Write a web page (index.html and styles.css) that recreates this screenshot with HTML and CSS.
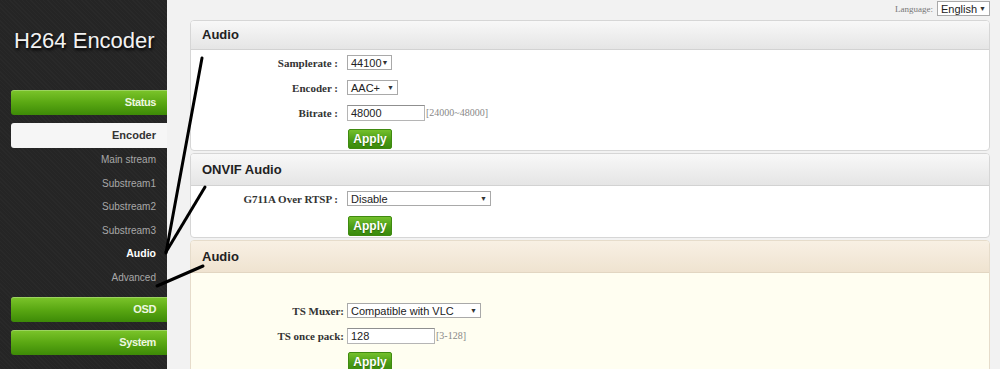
FILE: index.html
```html
<!DOCTYPE html>
<html lang="en">
<head>
    <meta charset="UTF-8">
    <title>H264 Encoder - Audio</title>
    <link rel="stylesheet" href="styles.css">
</head>
<body>
<div class="sidebar">
    <h1 class="logo">H264 Encoder</h1>
    <div class="menu-btn">Status</div>
    <div class="menu-open">Encoder</div>
    <ul class="submenu">
        <li>Main stream</li>
        <li>Substream1</li>
        <li>Substream2</li>
        <li>Substream3</li>
        <li class="active">Audio</li>
        <li>Advanced</li>
    </ul>
    <div class="menu-btn">OSD</div>
    <div class="menu-btn">System</div>
</div>

<div class="main">
    <div class="topbar">
        <span class="lang-label">Language:</span>
        <div class="field lang-select"><span>English</span><span class="arrow">▼</span></div>
    </div>

    <div class="panel">
        <div class="panel-head">Audio</div>
        <div class="panel-body">
            <div class="row">
                <label>Samplerate :</label>
                <div class="field w45"><span>44100</span><span class="arrow">▼</span></div>
            </div>
            <div class="row">
                <label>Encoder :</label>
                <div class="field w51"><span>AAC+</span><span class="arrow">▼</span></div>
            </div>
            <div class="row">
                <label>Bitrate :</label>
                <div class="field input w78">48000</div>
                <span class="hint">[24000~48000]</span>
            </div>
            <div class="btn-row"><button class="apply">Apply</button></div>
        </div>
    </div>

    <div class="panel">
        <div class="panel-head tall">ONVIF Audio</div>
        <div class="panel-body">
            <div class="row">
                <label>G711A Over RTSP :</label>
                <div class="field w144"><span>Disable</span><span class="arrow">▼</span></div>
            </div>
            <div class="btn-row wide"><button class="apply">Apply</button></div>
        </div>
    </div>

    <div class="panel warm">
        <div class="panel-head tall">Audio</div>
        <div class="panel-body spaced">
            <div class="row tight">
                <label>TS Muxer:</label>
                <div class="field w134"><span>Compatible with VLC</span><span class="arrow">▼</span></div>
            </div>
            <div class="row tight">
                <label>TS once pack:</label>
                <div class="field input w88">128</div>
                <span class="hint">[3-128]</span>
            </div>
            <div class="btn-row"><button class="apply">Apply</button></div>
        </div>
    </div>
</div>

<!-- hand drawn marks over the screenshot -->
<svg class="marks" width="1000" height="369" viewBox="0 0 1000 369">
    <path d="M202 58 L166 253" />
    <path d="M205 187 L166 252" />
    <path d="M203 266 L157 286" />
</svg>
</body>
</html>
```

FILE: styles.css
```css
body {
    margin: 0;
    padding: 0;
    display: flex;
    height: 369px;
    overflow: hidden;
    background-color: #f2f2f2;
    font-family: "Liberation Sans", Arial, sans-serif;
    position: relative;
}

.sidebar {
    width: 167px;
    flex-shrink: 0;
    background-color: #252525;
    background-image: repeating-linear-gradient(45deg, rgba(255,255,255,0.02) 0 1px, transparent 1px 3px);
}

.logo {
    margin: 28px 0 36px 14px;
    font-size: 22px;
    line-height: 26px;
    font-weight: normal;
    color: #f2f2f2;
    text-shadow: 1px 2px 3px #000;
}

.menu-btn {
    margin: 0 0 8px 11px;
    height: 25px;
    line-height: 25px;
    padding-right: 11px;
    text-align: right;
    font-size: 11px;
    font-weight: bold;
    letter-spacing: -0.4px;
    color: #eef7e0;
    border-radius: 3px 0 0 3px;
    background: linear-gradient(to bottom, #7cc52b 0%, #5aa813 50%, #3d8a07 100%);
    box-shadow: inset 0 1px 0 rgba(255,255,255,0.25);
}

.menu-open {
    margin: 0 0 0 11px;
    height: 25px;
    line-height: 25px;
    padding-right: 11px;
    text-align: right;
    font-size: 11px;
    font-weight: bold;
    color: #333;
    background-color: #f6f6f6;
    border-radius: 3px 0 0 3px;
}

.submenu {
    list-style: none;
    margin: 0 0 8px 0;
    padding: 0 11px 0 0;
}

.submenu li {
    height: 23.5px;
    line-height: 23.5px;
    text-align: right;
    font-size: 10px;
    color: #a8a8a8;
}

.submenu li.active {
    color: #fff;
    font-weight: bold;
    font-size: 10.5px;
}

.main {
    flex: 1;
    padding: 0 10px 0 23px;
}

.topbar {
    height: 20px;
    display: flex;
    justify-content: flex-end;
    align-items: flex-start;
    gap: 4px;
    padding-top: 1px;
    box-sizing: border-box;
}

.lang-label {
    font-family: "Liberation Serif", "Times New Roman", serif;
    font-size: 9px;
    color: #777;
    margin-top: 3px;
}

.lang-select {
    width: 53px;
    height: 15px;
    font-size: 12px;
}

.panel {
    background-color: #fff;
    border: 1px solid #d6d6d6;
    border-radius: 4px;
    margin-bottom: 2px;
    overflow: hidden;
}

.panel-head {
    height: 28px;
    line-height: 28px;
    padding-left: 11px;
    font-size: 13px;
    font-weight: bold;
    color: #222;
    background: linear-gradient(to bottom, #f8f8f8, #e5e5e5);
    border-bottom: 1px solid #d2d2d2;
}

.panel-head.tall {
    height: 31px;
    line-height: 31px;
}

.warm {
    background-color: #fffef1;
    border-color: #e6dccb;
}

.warm .panel-head {
    background: linear-gradient(to bottom, #f8f0e4, #efe3d0);
    border-bottom-color: #e2d6c2;
}

.panel-body {
    padding: 0 0 1px 0;
}

.panel-body.spaced {
    padding-top: 25px;
}

.row {
    height: 25px;
    display: flex;
    align-items: center;
    gap: 9px;
}

.row label {
    width: 147px;
    text-align: right;
    font-family: "Liberation Serif", "Times New Roman", serif;
    font-size: 11px;
    font-weight: bold;
    color: #333;
}

.row.tight {
    gap: 3px;
}

.row.tight label {
    width: 153px;
}

.field {
    height: 15px;
    box-sizing: border-box;
    border: 1px solid #a9a9a9;
    background-color: #fff;
    display: flex;
    justify-content: space-between;
    align-items: center;
    padding: 0 3px 0 3px;
    font-size: 11px;
    color: #222;
}

.field.input {
    height: 16px;
    border-color: #b5b5b5;
    border-top-color: #8f8f8f;
}

.arrow {
    font-size: 7px;
    color: #333;
}

.w45 { width: 45px; }
.w51 { width: 51px; }
.w78 { width: 78px; }
.w88 { width: 88px; }
.w134 { width: 134px; }
.w144 { width: 144px; }

.hint {
    margin-left: -8px;
    font-family: "Liberation Serif", "Times New Roman", serif;
    font-size: 10px;
    color: #888;
}

.row.tight .hint {
    margin-left: -2px;
}

.btn-row {
    padding: 4px 0 0 157px;
}

.btn-row.wide {
    padding-top: 5px;
}

.apply {
    display: block;
    width: 44px;
    height: 20px;
    padding: 0;
    border: 1px solid #3f8a10;
    border-radius: 2px;
    background: linear-gradient(to bottom, #74c02c, #4a9c16 55%, #3a8a0c);
    color: #fff;
    font-family: "Liberation Sans", Arial, sans-serif;
    font-size: 12px;
    font-weight: bold;
    text-shadow: 0 1px 1px rgba(0,0,0,0.3);
}

.marks {
    position: absolute;
    left: 0;
    top: 0;
    pointer-events: none;
}

.marks path {
    stroke: #000;
    stroke-width: 3;
    stroke-linecap: round;
    fill: none;
}
```
